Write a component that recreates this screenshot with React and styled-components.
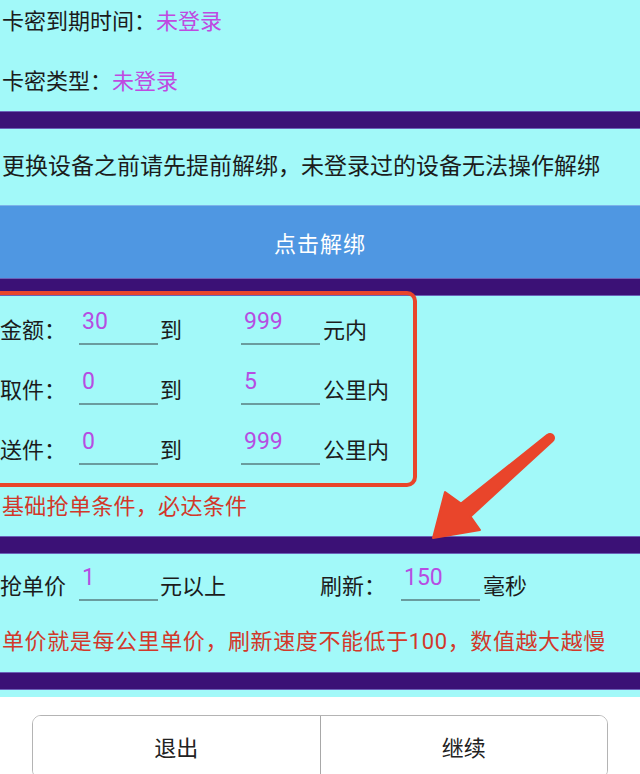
import React from 'react';
import styled, { createGlobalStyle } from 'styled-components';

const GlobalStyle = createGlobalStyle`
  html, body {
    margin: 0;
    padding: 0;
    background: #fff;
  }
  body {
    font-family: Roboto, "Noto Sans CJK SC", sans-serif;
    overflow: hidden;
  }
`;

const Screen = styled.div`
  position: relative;
  width: 640px;
  height: 774px;
  overflow: hidden;
  background: #fff;
`;

const Panel = styled.div`
  background: #a2f9f9;
  padding-bottom: 7px;
  color: #1c1c1c;
  font-size: 22px;
`;

const InfoRow = styled.div`
  height: 44px;
  line-height: 44px;
  padding-left: 2px;
  margin-top: ${(p) => p.$gap || 0}px;
`;

const Value = styled.span`
  color: #bf4ae0;
`;

const Bar = styled.div`
  height: 18px;
  background: #3b1176;
  border-top: 1px solid #6a62b8;
  border-bottom: 1px solid #6a62b8;
  box-sizing: border-box;
  margin-top: ${(p) => p.$gap || 0}px;
`;

const Notice = styled.div`
  height: 44px;
  line-height: 44px;
  padding-left: 2px;
  margin-top: ${(p) => p.$gap || 0}px;
  color: ${(p) => (p.$warn ? '#d2382a' : '#1c1c1c')};
  font-size: ${(p) => p.$size || 22}px;
  letter-spacing: ${(p) => p.$track || 0}px;
  white-space: nowrap;
`;

const UnbindButton = styled.button`
  display: block;
  width: 100%;
  height: 73px;
  margin-top: 16px;
  border: none;
  border-top: 1px solid #7db3ea;
  background: #4f97e2;
  color: #fff;
  font-family: inherit;
  font-size: 22px;
  letter-spacing: 1px;
`;

const Form = styled.div`
  padding-top: 2px;
`;

const Row = styled.div`
  display: flex;
  align-items: center;
  height: 60px;
`;

const Cell = styled.div`
  width: ${(p) => p.$w}px;
  flex: none;
  white-space: nowrap;
`;

const Field = styled.div`
  width: 79px;
  height: 33px;
  margin-right: ${(p) => p.$after || 0}px;
  flex: none;
  box-sizing: border-box;
  border-bottom: 2px solid #6a9c9e;
  padding-left: 3px;
  line-height: 20px;
  color: #b64de2;
  font-size: 23px;
`;

const Footer = styled.div`
  padding: 18px 32px 0;
`;

const ButtonGroup = styled.div`
  display: flex;
  height: 62px;
  border: 1.5px solid #b4b4b4;
  border-radius: 9px;
  overflow: hidden;
`;

const FooterButton = styled.button`
  flex: 1;
  border: none;
  background: #fff;
  font-family: inherit;
  font-size: 22px;
  color: #222;
  padding-bottom: 4px;
  & + & {
    border-left: 1.5px solid #a8a8a8;
  }
`;

/* hand-drawn red markup on top of the form */
const MarkBox = styled.div`
  position: absolute;
  left: -12px;
  top: 291px;
  width: 429px;
  height: 196px;
  border: 4px solid #e9452b;
  border-radius: 10px;
  box-sizing: border-box;
  pointer-events: none;
`;

const MarkArrow = styled.svg`
  position: absolute;
  left: 0;
  top: 0;
  pointer-events: none;
`;

const ranges = [
  { label: '金额：', from: '30', to: '999', unit: '元内' },
  { label: '取件：', from: '0', to: '5', unit: '公里内' },
  { label: '送件：', from: '0', to: '999', unit: '公里内' },
];

export default function App() {
  return (
    <Screen>
      <GlobalStyle />
      <Panel>
        <InfoRow>
          卡密到期时间：<Value>未登录</Value>
        </InfoRow>
        <InfoRow $gap={16}>
          卡密类型：<Value>未登录</Value>
        </InfoRow>
        <Bar $gap={7} />
        <Notice $gap={16} $size={23}>
          更换设备之前请先提前解绑，未登录过的设备无法操作解绑
        </Notice>
        <UnbindButton>点击解绑</UnbindButton>
        <Bar />
        <Form>
          {ranges.map((r) => (
            <Row key={r.label}>
              <Cell $w={79}>{r.label}</Cell>
              <Field $after={2}>{r.from}</Field>
              <Cell $w={81}>到</Cell>
              <Field $after={3}>{r.to}</Field>
              <Cell $w={120}>{r.unit}</Cell>
            </Row>
          ))}
        </Form>
        <Notice $gap={7} $warn $track={0.3}>
          基础抢单条件，必达条件
        </Notice>
        <Bar $gap={7} />
        <Row>
          <Cell $w={79}>抢单价</Cell>
          <Field $after={2}>1</Field>
          <Cell $w={160}>元以上</Cell>
          <Cell $w={81}>刷新：</Cell>
          <Field $after={3}>150</Field>
          <Cell $w={80}>毫秒</Cell>
        </Row>
        <Notice $gap={6} $warn $track={0.6}>
          单价就是每公里单价，刷新速度不能低于100，数值越大越慢
        </Notice>
        <Bar $gap={8} />
      </Panel>
      <Footer>
        <ButtonGroup>
          <FooterButton>退出</FooterButton>
          <FooterButton>继续</FooterButton>
        </ButtonGroup>
      </Footer>

      <MarkBox />
      <MarkArrow width="640" height="774" viewBox="0 0 640 774">
        <path
          d="M547.4 434.9 L461 503.5 L445 492 L433 538 L480 530 L470.5 516.5 L552.6 441 A4 4 0 0 0 547.4 434.9 Z"
          fill="#e9452b"
          stroke="#e9452b"
          strokeWidth="2"
          strokeLinejoin="round"
        />
      </MarkArrow>
    </Screen>
  );
}
